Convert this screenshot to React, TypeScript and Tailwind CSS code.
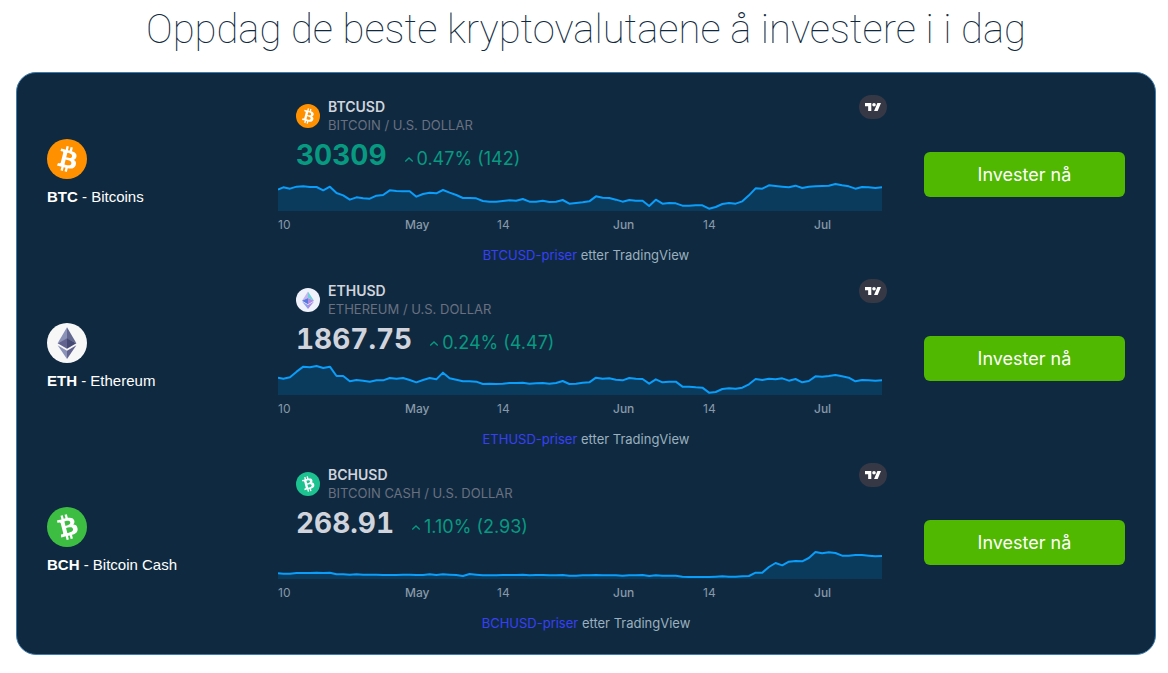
import React from 'react';

interface Coin {
  code: string;
  name: string;
  pair: string;
  description: string;
  price: string;
  change: string;
  priceClass: string;
  logo: React.ReactNode;
  badge: React.ReactNode;
  first: number;
  series: number[];
}

const BITCOIN_PATH =
  'M23.189 14.02c.314-2.096-1.283-3.223-3.465-3.975l.708-2.84-1.728-.43-.69 2.765c-.454-.114-.92-.22-1.385-.326l.695-2.783L15.596 6l-.708 2.839c-.376-.086-.746-.17-1.104-.26l.002-.009-2.384-.595-.46 1.846s1.283.294 1.256.312c.7.175.826.638.805 1.006l-.806 3.235c.048.012.11.03.18.057l-.183-.045-1.13 4.532c-.086.212-.303.531-.793.41.018.025-1.256-.313-1.256-.313l-.858 1.978 2.25.561c.418.105.828.215 1.231.318l-.715 2.872 1.727.43.708-2.84c.472.127.93.245 1.378.357l-.706 2.828 1.728.43.715-2.866c2.948.558 5.164.333 6.097-2.333.752-2.146-.037-3.385-1.588-4.192 1.13-.26 1.98-1.003 2.207-2.538zm-3.95 5.538c-.533 2.147-4.148.986-5.32.695l.95-3.805c1.172.293 4.929.872 4.37 3.11zm.535-5.569c-.487 1.953-3.495.96-4.47.717l.86-3.45c.975.243 4.118.696 3.61 2.733z';

function BitcoinLogo({ fill, rotate = 0, className }: { fill: string; rotate?: number; className: string }) {
  return (
    <svg viewBox="0 0 32 32" className={className} aria-hidden="true">
      <circle cx="16" cy="16" r="16" fill={fill} />
      <path d={BITCOIN_PATH} fill="#fff" transform={`rotate(${rotate} 16 16) translate(16 16) scale(1.04) translate(-15.9 -16)`} />
    </svg>
  );
}

function EthereumLogo({ className }: { className: string }) {
  return (
    <svg viewBox="0 0 32 32" className={className} aria-hidden="true">
      <circle cx="16" cy="16" r="16" fill="#f7f7f8" />
      <g transform="translate(-.5 0)">
        <path d="M16.5 3.4v9.2l7.5 3.6z" fill="#62688f" />
        <path d="M16.5 3.4L9 16.2l7.5-3.6z" fill="#8a92b8" />
        <path d="M16.5 12.1L9 16.1l7.5 4.5z" fill="#62648f" />
        <path d="M16.5 12.1l7.5 4-7.5 4.5z" fill="#454a75" />
        <path d="M16.5 22.2L9 17.8l7.5 11z" fill="#8a92b8" />
        <path d="M16.5 22.2l7.5-4.4-7.5 11z" fill="#62648f" />
      </g>
    </svg>
  );
}

function EthereumBadge({ className }: { className: string }) {
  return (
    <svg viewBox="0 0 24 24" className={className} aria-hidden="true">
      <circle cx="12" cy="12" r="12" fill="#f0f2fb" />
      <path d="M12 3.5L6 12.7l6-2.7z" fill="#c3b5f0" />
      <path d="M12 3.5V10l6 2.7z" fill="#6fd0d8" />
      <path d="M6 12.7l6-2.7v6.2z" fill="#5a78e0" />
      <path d="M12 10l6 2.7-6 3.5z" fill="#b08be4" />
      <path d="M6 13.6l6 3.5V21z" fill="#8f9cf0" />
      <path d="M18 13.6l-6 3.5V21z" fill="#a58ce6" />
    </svg>
  );
}

function TradingViewBadge() {
  return (
    <span className="flex h-6 w-7 items-center justify-center rounded-full bg-[#363845]">
      <svg viewBox="0 4 35.5 18" className="w-4" fill="#fff" aria-hidden="true">
        <path d="M14 22H7V11H0V4h14v18zM28 22h-8l7.5-18h8L28 22z" />
        <circle cx="20" cy="8" r="4" />
      </svg>
    </span>
  );
}

// Distances from the top of a plot that is 90 units high.
const COINS: Coin[] = [
  {
    code: 'BTC',
    name: 'Bitcoins',
    pair: 'BTCUSD',
    description: 'BITCOIN / U.S. DOLLAR',
    price: '30309',
    change: '0.47% (142)',
    priceClass: 'text-[#089981]',
    logo: <BitcoinLogo fill="#ff9100" className="size-10" />,
    badge: <BitcoinLogo fill="#ff9100" className="size-6" />,
    first: 26,
    series: [
      19, 23, 17, 16, 18, 18, 28, 17, 36, 43, 56, 49, 52, 53, 44, 42, 28, 30, 31, 31, 47, 39, 35, 37, 27, 35, 42, 51,
      51, 52, 60, 62, 62, 60, 58, 59, 54, 62, 62, 59, 63, 62, 57, 68, 66, 64, 61, 46, 50, 51, 56, 62, 57, 59, 59, 75,
      56, 68, 66, 67, 74, 74, 73, 73, 83, 78, 69, 66, 68, 61, 43, 22, 23, 13, 15, 17, 19, 14, 21, 17, 16, 15, 14, 9,
      13, 16, 23, 18, 19, 21, 19,
    ],
  },
  {
    code: 'ETH',
    name: 'Ethereum',
    pair: 'ETHUSD',
    description: 'ETHEREUM / U.S. DOLLAR',
    price: '1867.75',
    change: '0.24% (4.47)',
    priceClass: 'text-[#d1d4dc]',
    logo: <EthereumLogo className="size-10" />,
    badge: <EthereumBadge className="size-6" />,
    first: 38,
    series: [
      41, 37, 20, 5, 7, 3, 9, 5, 33, 33, 49, 45, 47, 50, 46, 46, 39, 41, 39, 45, 52, 45, 39, 43, 23, 40, 44, 49, 49,
      50, 57, 56, 57, 56, 54, 54, 53, 56, 55, 54, 56, 54, 48, 57, 56, 53, 52, 38, 41, 40, 44, 46, 39, 41, 42, 56, 43,
      52, 50, 50, 65, 65, 67, 68, 83, 81, 72, 70, 71, 68, 58, 42, 45, 41, 43, 40, 47, 42, 52, 48, 34, 35, 33, 30, 34,
      38, 49, 45, 46, 47, 46,
    ],
  },
  {
    code: 'BCH',
    name: 'Bitcoin Cash',
    pair: 'BCHUSD',
    description: 'BITCOIN CASH / U.S. DOLLAR',
    price: '268.91',
    change: '1.10% (2.93)',
    priceClass: 'text-[#d1d4dc]',
    logo: <BitcoinLogo fill="#3dbe43" rotate={-28} className="size-10" />,
    badge: <BitcoinLogo fill="#1cc28f" rotate={-28} className="size-6" />,
    first: 73,
    series: [
      74, 74, 72, 72, 72, 71, 72, 71, 76, 76, 77, 76, 77, 77, 77, 78, 78, 78, 77, 77, 78, 78, 76, 78, 76, 77, 78, 81,
      75, 77, 79, 79, 79, 78, 78, 78, 77, 79, 78, 78, 79, 79, 78, 80, 80, 79, 79, 78, 79, 79, 79, 80, 79, 79, 78, 81,
      79, 80, 80, 80, 83, 84, 84, 84, 84, 83, 82, 83, 83, 82, 81, 71, 71, 54, 42, 49, 38, 36, 37, 27, 9, 13, 10, 12,
      20, 20, 18, 18, 20, 22, 21,
    ],
  },
];

function PriceChart({ first, series }: { first: number; series: number[] }) {
  const step = 20;
  const offset = 16;
  const width = offset + step * (series.length - 1);
  const line = [`0,${first}`, ...series.map((y, i) => `${offset + i * step},${y}`)].join(' ');

  return (
    <svg viewBox={`0 0 ${width} 90`} preserveAspectRatio="none" className="block h-[30px] w-full" aria-hidden="true">
      <polygon points={`${line} ${width},90 0,90`} fill="#0a3b5c" />
      <polyline
        points={line}
        fill="none"
        stroke="#0a9dfa"
        strokeWidth="2"
        strokeLinejoin="round"
        vectorEffect="non-scaling-stroke"
      />
    </svg>
  );
}

function PriceWidget({ coin }: { coin: Coin }) {
  return (
    <div className="min-w-0 flex-1 font-['Inter',sans-serif]">
      <div className="flex items-start pr-[7px] pl-[18px]">
        <div className="flex flex-1 items-center gap-2 pt-[3px]">
          {coin.badge}
          <div>
            <p className="text-sm leading-[18px] font-semibold text-[#d1d4dc]">{coin.pair}</p>
            <p className="text-[13px] leading-[18px] text-[#6a7080]">{coin.description}</p>
          </div>
        </div>
        <TradingViewBadge />
      </div>

      <div className="mt-[7px] flex items-baseline pl-[18px]">
        <span className={`text-[28px] leading-7 font-bold tabular-nums ${coin.priceClass}`}>{coin.price}</span>
        <svg viewBox="0 0 8 8" className="mr-1 ml-[18px] size-2" fill="none" stroke="#089981" strokeWidth="1.4" aria-hidden="true">
          <path d="M.2 4.4L4 1l3.8 3.4" />
        </svg>
        <span className="text-lg leading-7 text-[#089981]">{coin.change}</span>
      </div>

      <div className="mt-2 pr-3">
        <PriceChart first={coin.first} series={coin.series} />
        <div className="mt-1 grid grid-cols-[127fr_92fr_116fr_90fr_111fr_68fr] text-xs leading-5 text-[#8798a8]">
          <span>10</span>
          <span className="font-medium">May</span>
          <span>14</span>
          <span className="font-medium">Jun</span>
          <span>14</span>
          <span className="font-medium">Jul</span>
        </div>
      </div>

      <p className="mt-2.5 text-center text-[13px] leading-5 text-[#9bb0bf]">
        <a href="#" className="text-[#3840f5]">
          {coin.pair}-priser
        </a>{' '}
        etter TradingView
      </p>
    </div>
  );
}

function CoinRow({ coin }: { coin: Coin }) {
  return (
    <li className="flex h-[184px] items-start">
      <div className="w-[231px] shrink-0 pt-11">
        {coin.logo}
        <p className="mt-2 text-[15px] leading-5 text-white">
          <strong className="font-bold">{coin.code}</strong> - {coin.name}
        </p>
      </div>
      <PriceWidget coin={coin} />
      <button
        type="button"
        className="mt-[57px] ml-[30px] h-[45px] w-[201px] shrink-0 cursor-pointer rounded-md bg-[#50b800] font-['Inter',sans-serif] text-lg text-white"
      >
        Invester nå
      </button>
    </li>
  );
}

export default function App() {
  return (
    <main className="bg-white pr-3 pl-4 font-['Liberation_Sans',sans-serif]">
      <h1 className="pt-[5px] pb-[17px] text-center font-['Roboto',sans-serif] text-[40px] leading-[50px] font-thin text-[#0f2a40]">
        Oppdag de beste kryptovalutaene å investere i i dag
      </h1>
      <ul className="rounded-[20px] border border-[#3f7cae] bg-[#0f2a40] px-[30px] pt-[22px] pb-[7px]">
        {COINS.map((coin) => (
          <CoinRow key={coin.code} coin={coin} />
        ))}
      </ul>
    </main>
  );
}
